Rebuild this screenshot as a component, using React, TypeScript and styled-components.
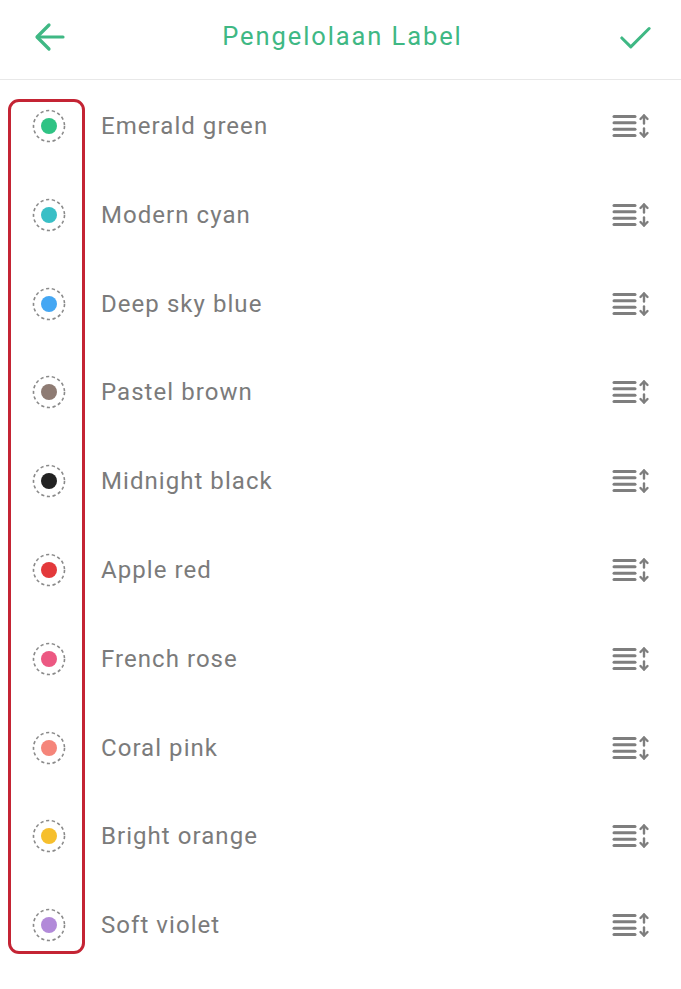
import React from "react";
import styled, { createGlobalStyle } from "styled-components";

const Global = createGlobalStyle`
  html, body { margin: 0; padding: 0; background: #fff; }
  body { font-family: Roboto, "Noto Sans", "Liberation Sans", sans-serif; }
`;

const Page = styled.div`
  position: relative;
  width: 681px;
  min-height: 989px;
  background: #fff;
`;

const Header = styled.header`
  height: 79px;
  display: flex;
  align-items: center;
  justify-content: space-between;
  padding: 0 30px 0 34px;
  border-bottom: 1px solid #e8e8e8;
  box-sizing: content-box;
`;

const IconButton = styled.div`
  width: 32px;
  height: 32px;
  display: flex;
  align-items: center;
  justify-content: center;
  margin-top: -6px;
`;

const Title = styled.h1`
  margin: 0;
  margin-top: -8px;
  font-size: 25.5px;
  font-weight: 400;
  color: #3fb884;
  letter-spacing: 1.9px;
`;

const List = styled.ul`
  list-style: none;
  margin: 0;
  padding: 1.6px 0 0;
`;

const Row = styled.li`
  height: 88.8px;
  display: flex;
  align-items: center;
  padding: 0 30px 0 32px;
`;

const Swatch = styled.div`
  width: 34px;
  height: 34px;
  flex: none;
  display: flex;
  align-items: center;
  justify-content: center;
`;

const Name = styled.span`
  flex: 1;
  margin-left: 35px;
  font-size: 24px;
  color: #7b7b7b;
  margin-top: 0px;
  letter-spacing: 1.05px;
`;

const Handle = styled.div`
  width: 40px;
  height: 26px;
  display: flex;
  align-items: center;
  justify-content: center;
`;

const Highlight = styled.div`
  position: absolute;
  left: 8px;
  top: 99px;
  width: 71px;
  height: 849px;
  border: 3px solid #c42434;
  border-radius: 11px;
  pointer-events: none;
`;

const labels = [
  { name: "Emerald green", color: "#2fc384" },
  { name: "Modern cyan", color: "#39bfc6" },
  { name: "Deep sky blue", color: "#45a7f3" },
  { name: "Pastel brown", color: "#8e7b73" },
  { name: "Midnight black", color: "#222222" },
  { name: "Apple red", color: "#e3393b" },
  { name: "French rose", color: "#ec5882" },
  { name: "Coral pink", color: "#f5857a" },
  { name: "Bright orange", color: "#f6bf2d" },
  { name: "Soft violet", color: "#b28ad9" },
];

const BackIcon = () => (
  <svg width="32" height="32" viewBox="0 0 32 32" fill="none" stroke="#3fb884" strokeWidth="3.2" strokeLinecap="round" strokeLinejoin="round">
    <path d="M29 16H3.5" />
    <path d="M15 4L3 16l12 12" />
  </svg>
);

const CheckIcon = () => (
  <svg width="34" height="32" viewBox="0 0 34 32" fill="none" stroke="#3fb884" strokeWidth="3.2" strokeLinecap="round" strokeLinejoin="round">
    <path d="M3 17l9.5 9.5L32 7" />
  </svg>
);

const DotIcon = ({ color }: { color: string }) => (
  <svg width="34" height="34" viewBox="0 0 34 34">
    <circle cx="17" cy="17" r="15.5" fill="none" stroke="#8a8a8a" strokeWidth="1.6" strokeDasharray="3.2 2.6" />
    <circle cx="17" cy="17" r="8" fill={color} />
  </svg>
);

const SortIcon = () => (
  <svg width="40" height="26" viewBox="0 0 40 26" fill="none" stroke="#7e7e7e" strokeLinecap="round">
    <g strokeWidth="3">
      <path d="M3 3.5h21" />
      <path d="M3 9.8h21" />
      <path d="M3 16.2h21" />
      <path d="M3 22.5h21" />
    </g>
    <g strokeWidth="2.4" strokeLinejoin="round">
      <path d="M33 2.5v8" />
      <path d="M29.5 6l3.5-3.5L36.5 6" />
      <path d="M33 15.5v8" />
      <path d="M29.5 20l3.5 3.5 3.5-3.5" />
    </g>
  </svg>
);

export default function App() {
  return (
    <Page>
      <Global />
      <Header>
        <IconButton>
          <BackIcon />
        </IconButton>
        <Title>Pengelolaan Label</Title>
        <IconButton>
          <CheckIcon />
        </IconButton>
      </Header>
      <List>
        {labels.map((l) => (
          <Row key={l.name}>
            <Swatch>
              <DotIcon color={l.color} />
            </Swatch>
            <Name>{l.name}</Name>
            <Handle>
              <SortIcon />
            </Handle>
          </Row>
        ))}
      </List>
      <Highlight />
    </Page>
  );
}
